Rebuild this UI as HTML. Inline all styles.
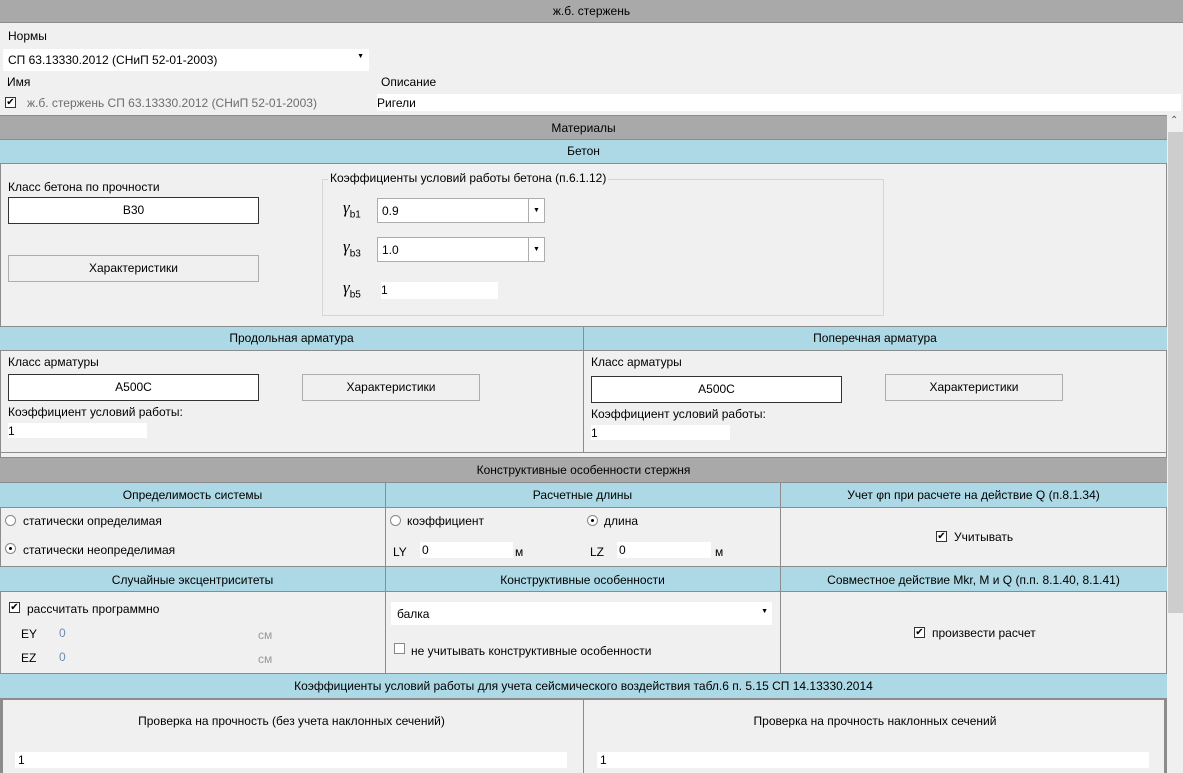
<!DOCTYPE html>
<html><head><meta charset="utf-8"><style>
*{box-sizing:border-box;margin:0;padding:0}
body{width:1183px;height:773px;overflow:hidden;background:#f0f0f0;font-family:"Liberation Sans","DejaVu Sans",sans-serif;font-size:12px;color:#000;position:relative}
.a{position:absolute}
.gh{position:absolute;background:#a9a9a9;text-align:center;border-bottom:1px solid #8c8c8c}
.bh{position:absolute;background:#add8e6;text-align:center;border-bottom:1px solid #8c8c8c;border-top:1px solid #8c8c8c}
.w{position:absolute;background:#fff}
.box{position:absolute;background:#fff;border:1px solid #333;text-align:center}
.btn{position:absolute;background:#f0f0f0;border:1px solid #adadad;text-align:center}
.vl{position:absolute;width:1px;background:#8c8c8c}
.dd{position:absolute;background:#fff;border:1px solid #adadad}
.dd b{position:absolute;right:0;top:0;bottom:0;width:16px;border-left:1px solid #adadad;font-size:7px;text-align:center;font-weight:normal}
.cb{position:absolute;width:11px;height:11px;border:1px solid #333;background:#fff;font-size:10px;line-height:9px;text-align:center}
.rb{position:absolute;width:11px;height:11px;border:1px solid #888;border-radius:50%;background:#fff}
.rb.on::after{content:"";position:absolute;left:3px;top:3px;width:3px;height:3px;border-radius:50%;background:#000}
.g{font-family:"Liberation Serif",serif;font-size:17px;font-style:italic}
.g sub{font-size:10px;font-style:normal;font-family:"Liberation Sans",sans-serif}
</style></head><body>
<div class="gh" style="left:0;top:0;width:1183px;height:23px;line-height:23px">ж.б. стержень</div>
<div class="a" style="left:8px;top:29px">Нормы</div>
<div class="w" style="left:3px;top:49px;width:366px;height:22px"><span class="a" style="left:5px;top:4px">СП 63.13330.2012 (СНиП 52-01-2003)</span><span class="a" style="right:5px;top:4px;font-size:7px">▼</span></div>
<div class="a" style="left:7px;top:75px">Имя</div>
<div class="a" style="left:381px;top:75px">Описание</div>
<div class="cb" style="left:5px;top:97px">✔</div>
<div class="a" style="left:27px;top:96px;color:#6d6d6d">ж.б. стержень СП 63.13330.2012 (СНиП 52-01-2003)</div>
<div class="w" style="left:377px;top:94px;width:804px;height:17px"><span class="a" style="left:0;top:2px">Ригели</span></div>

<!-- scrollbar -->
<div class="a" style="left:1167px;top:115px;width:16px;height:658px;background:#f0f0f0"></div>
<div class="a" style="left:1168px;top:132px;width:15px;height:481px;background:#cdcdcd"></div>
<div class="a" style="left:1170px;top:115px;font-size:10px;color:#555">⌃</div>

<div class="a" style="left:0;top:115px;width:1167px;height:658px;border-left:1px solid #8c8c8c;border-right:1px solid #8c8c8c"></div>
<div class="gh" style="left:0;top:115px;width:1167px;height:25px;line-height:25px;border-top:1px solid #8c8c8c">Материалы</div>
<div class="bh" style="left:0;top:139px;width:1167px;height:25px;line-height:23px">Бетон</div>
<div class="a" style="left:8px;top:180px">Класс бетона по прочности</div>
<div class="box" style="left:8px;top:197px;width:251px;height:27px;line-height:25px">B30</div>
<div class="btn" style="left:8px;top:255px;width:251px;height:27px;line-height:25px">Характеристики</div>
<div class="a" style="left:322px;top:179px;width:562px;height:137px;border:1px solid #d5d5d5"></div>
<div class="a" style="left:328px;top:171px;background:#f0f0f0;padding:0 2px">Коэффициенты условий работы бетона (п.6.1.12)</div>
<div class="a g" style="left:343px;top:198px">γ<sub>b1</sub></div>
<div class="dd" style="left:377px;top:198px;width:168px;height:25px"><span class="a" style="left:4px;top:5px">0.9</span><b style="line-height:23px">▼</b></div>
<div class="a g" style="left:343px;top:237px">γ<sub>b3</sub></div>
<div class="dd" style="left:377px;top:237px;width:168px;height:25px"><span class="a" style="left:4px;top:5px">1.0</span><b style="line-height:23px">▼</b></div>
<div class="a g" style="left:343px;top:278px">γ<sub>b5</sub></div>
<div class="w" style="left:381px;top:282px;width:117px;height:17px"><span class="a" style="left:0;top:1px">1</span></div>

<div class="bh" style="left:0;top:326px;width:1167px;height:25px;line-height:23px"></div>
<div class="a" style="left:0;top:331px;width:583px;text-align:center">Продольная арматура</div>
<div class="a" style="left:583px;top:331px;width:584px;text-align:center">Поперечная арматура</div>
<div class="vl" style="left:583px;top:326px;height:127px"></div>
<div class="a" style="left:0;top:452px;width:1167px;height:1px;background:#8c8c8c"></div>
<div class="a" style="left:8px;top:355px">Класс арматуры</div>
<div class="box" style="left:8px;top:374px;width:251px;height:27px;line-height:25px">A500C</div>
<div class="btn" style="left:302px;top:374px;width:178px;height:27px;line-height:25px">Характеристики</div>
<div class="a" style="left:8px;top:405px">Коэффициент условий работы:</div>
<div class="w" style="left:8px;top:423px;width:139px;height:15px"><span class="a" style="left:0;top:1px">1</span></div>
<div class="a" style="left:591px;top:355px">Класс арматуры</div>
<div class="box" style="left:591px;top:376px;width:251px;height:27px;line-height:25px">A500C</div>
<div class="btn" style="left:885px;top:374px;width:178px;height:27px;line-height:25px">Характеристики</div>
<div class="a" style="left:591px;top:407px">Коэффициент условий работы:</div>
<div class="w" style="left:591px;top:425px;width:139px;height:15px"><span class="a" style="left:0;top:1px">1</span></div>

<div class="gh" style="left:0;top:457px;width:1167px;height:26px;line-height:25px;border-top:1px solid #8c8c8c">Конструктивные особенности стержня</div>
<div class="bh" style="left:0;top:482px;width:1167px;height:26px"></div>
<div class="a" style="left:0;top:488px;width:385px;text-align:center">Определимость системы</div>
<div class="a" style="left:385px;top:488px;width:395px;text-align:center">Расчетные длины</div>
<div class="a" style="left:780px;top:488px;width:387px;text-align:center">Учет φn при расчете на действие Q (п.8.1.34)</div>
<div class="rb" style="left:5px;top:515px"></div><div class="a" style="left:23px;top:514px">статически определимая</div>
<div class="rb on" style="left:5px;top:543px"></div><div class="a" style="left:23px;top:543px">статически неопределимая</div>
<div class="rb" style="left:390px;top:515px"></div><div class="a" style="left:407px;top:514px">коэффициент</div>
<div class="rb on" style="left:587px;top:515px"></div><div class="a" style="left:604px;top:514px">длина</div>
<div class="a" style="left:393px;top:545px">LY</div><div class="w" style="left:420px;top:542px;width:93px;height:16px"><span class="a" style="left:2px;top:1px">0</span></div><div class="a" style="left:515px;top:545px">м</div>
<div class="a" style="left:590px;top:545px">LZ</div><div class="w" style="left:617px;top:542px;width:94px;height:16px"><span class="a" style="left:2px;top:1px">0</span></div><div class="a" style="left:715px;top:545px">м</div>
<div class="cb" style="left:936px;top:531px">✔</div><div class="a" style="left:954px;top:530px">Учитывать</div>

<div class="bh" style="left:0;top:566px;width:1167px;height:26px"></div>
<div class="a" style="left:0;top:573px;width:385px;text-align:center">Случайные эксцентриситеты</div>
<div class="a" style="left:385px;top:573px;width:395px;text-align:center">Конструктивные особенности</div>
<div class="a" style="left:780px;top:573px;width:387px;text-align:center">Совместное действие Mkr, M и Q (п.п. 8.1.40, 8.1.41)</div>
<div class="cb" style="left:9px;top:602px">✔</div><div class="a" style="left:27px;top:602px">рассчитать программно</div>
<div class="a" style="left:21px;top:627px">EY</div><div class="a" style="left:59px;top:626px;color:#6d8fb5">0</div><div class="a" style="left:258px;top:628px;color:#999">см</div>
<div class="a" style="left:21px;top:651px">EZ</div><div class="a" style="left:59px;top:650px;color:#6d8fb5">0</div><div class="a" style="left:258px;top:652px;color:#999">см</div>
<div class="w" style="left:391px;top:602px;width:381px;height:23px"><span class="a" style="left:6px;top:5px">балка</span><span class="a" style="right:4px;top:6px;font-size:7px">▼</span></div>
<div class="a" style="left:394px;top:643px;width:11px;height:11px;border:1px solid #888;background:#fff"></div><div class="a" style="left:411px;top:644px">не учитывать конструктивные особенности</div>
<div class="cb" style="left:914px;top:627px">✔</div><div class="a" style="left:932px;top:626px">произвести расчет</div>

<div class="vl" style="left:385px;top:482px;height:191px"></div>
<div class="vl" style="left:780px;top:482px;height:191px"></div>

<div class="bh" style="left:0;top:673px;width:1167px;height:26px;line-height:24px">Коэффициенты условий работы для учета сейсмического воздействия табл.6 п. 5.15 СП 14.13330.2014</div>
<div class="a" style="left:1px;top:698px;width:1165px;height:75px;border:2px solid #8c8c8c;border-bottom:none"></div>
<div class="vl" style="left:583px;top:698px;height:75px"></div>
<div class="a" style="left:0;top:714px;width:583px;text-align:center">Проверка на прочность (без учета наклонных сечений)</div>
<div class="a" style="left:583px;top:714px;width:584px;text-align:center">Проверка на прочность наклонных сечений</div>
<div class="w" style="left:15px;top:752px;width:552px;height:16px"><span class="a" style="left:3px;top:1px">1</span></div>
<div class="w" style="left:597px;top:752px;width:552px;height:16px"><span class="a" style="left:3px;top:1px">1</span></div>
</body></html>
